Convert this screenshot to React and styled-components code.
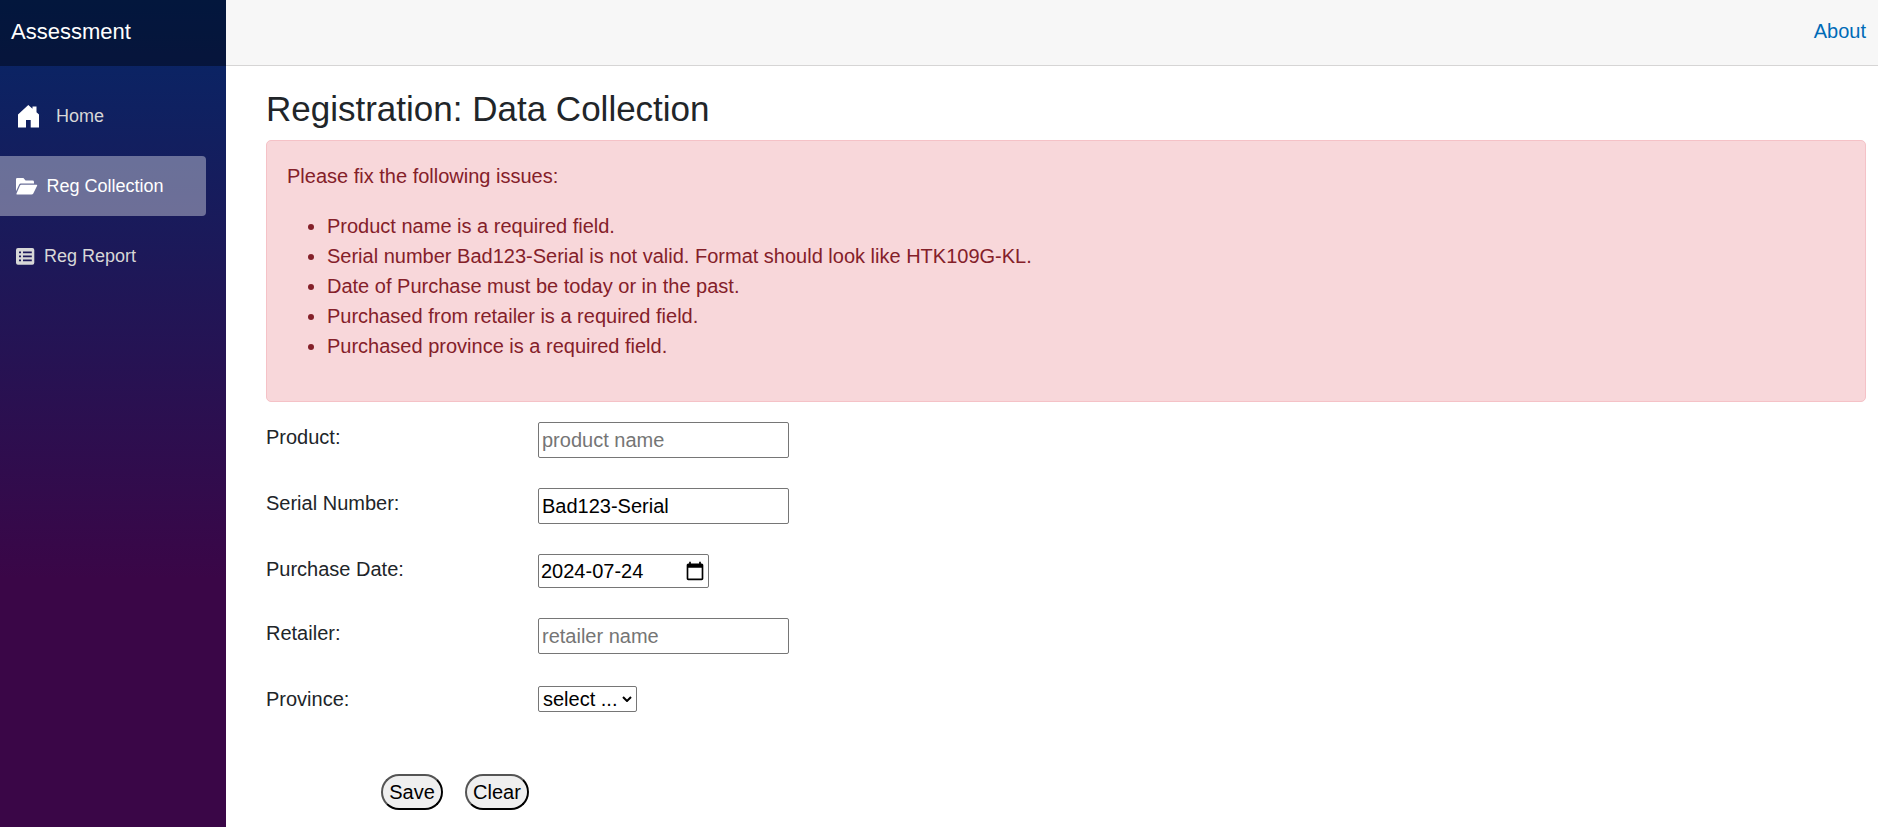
import React from 'react';
import styled, { createGlobalStyle } from 'styled-components';

const GlobalStyle = createGlobalStyle`
  *, *::before, *::after { box-sizing: border-box; }
  html, body, #root { height: 100%; }
  body {
    margin: 0;
    overflow: hidden;
    background: #fff;
    color: #212529;
    font-family: "Liberation Sans", Arial, sans-serif;
    font-size: 20px;
    line-height: 30px;
  }
`;

const Page = styled.div`
  display: flex;
  height: 100%;
`;

const Sidebar = styled.aside`
  flex: 0 0 226px;
  background-image: linear-gradient(180deg, rgb(5, 39, 103) 0%, #3a0647 70%);
`;

const Brand = styled.div`
  display: flex;
  align-items: center;
  height: 66px;
  padding: 0 0 3px 11px;
  background: rgba(0, 0, 0, 0.4);
  color: #fff;
  font-size: 22px;
`;

const Nav = styled.nav`
  display: flex;
  flex-direction: column;
  gap: 10px;
  padding-top: 20px;
`;

const NavItem = styled.a`
  display: flex;
  align-items: center;
  width: 206px;
  height: 60px;
  padding-left: ${(p) => p.$indent}px;
  gap: ${(p) => p.$gap}px;
  border-radius: 0 4px 4px 0;
  font-size: 18px;
  color: ${(p) => (p.$active ? '#fff' : '#d7d7d7')};
  background: ${(p) => (p.$active ? 'rgba(255, 255, 255, 0.37)' : 'transparent')};

  svg { color: ${(p) => p.$iconColor || 'inherit'}; flex: none; }
`;

const Main = styled.main`
  flex: 1;
  min-width: 0;
`;

const TopRow = styled.header`
  display: flex;
  justify-content: flex-end;
  align-items: center;
  height: 66px;
  padding: 0 12px 3px;
  background: #f7f7f7;
  border-bottom: 1px solid #d6d5d5;
`;

const AboutLink = styled.a`
  color: #006bb7;
`;

const Content = styled.article`
  padding: 22px 12px 0 40px;
`;

const Title = styled.h3`
  margin: 0 0 10px;
  font-size: 35px;
  font-weight: 400;
  line-height: 42px;
`;

const Alert = styled.section`
  height: 262px;
  padding: 20px;
  margin-bottom: 20px;
  border: 1px solid #f5c2c7;
  border-radius: 5px;
  background: #f8d7da;
  color: #842029;
`;

const AlertText = styled.p`
  margin: 0 0 20px;
`;

const IssueList = styled.ul`
  margin: 0;
  padding-left: 40px;
`;

const Row = styled.div`
  display: flex;
  align-items: flex-start;
  height: ${(p) => p.$height}px;
`;

const Label = styled.label`
  width: 272px;
`;

const TextInput = styled.input`
  width: 251px;
  height: 36px;
  padding: 1px 3px;
  border: 1px solid #767676;
  border-radius: 2px;
  background: #fff;
  color: #000;
  font: inherit;

  &::placeholder { color: #757575; }
`;

const DateField = styled.div`
  display: flex;
  align-items: center;
  justify-content: space-between;
  width: 171px;
  height: 34px;
  padding: 0 3px 0 2px;
  border: 1px solid #767676;
  border-radius: 2px;
  color: #000;
`;

const SelectField = styled.div`
  display: flex;
  align-items: center;
  gap: 5px;
  width: 99px;
  height: 26px;
  margin-top: 2px;
  padding-left: 4px;
  border: 1px solid #767676;
  border-radius: 2px;
  color: #000;
  white-space: nowrap;
`;

const Actions = styled.div`
  display: flex;
  gap: 22px;
  padding-left: 115px;
`;

const ActionButton = styled.button`
  width: ${(p) => p.$width}px;
  height: 36px;
  padding: 0;
  border: 2px outset #000;
  border-radius: 18px;
  background: #efefef;
  color: #000;
  font: inherit;
  line-height: 30px;
`;

const HomeIcon = () => (
  <svg width="22" height="23" viewBox="0 0 22 23" fill="currentColor">
    <path d="M0 9.500L10.300 0L14.500 3.800V1.500H18.500V7.300L21 9.500V22.500H12.700V15H8V22.500H0z" />
  </svg>
);

const FolderIcon = () => (
  <svg width="22" height="17" viewBox="0 0 22 17" fill="currentColor">
    <path d="M0 13.300V1.200Q0 0 1.200 0H7.400L9.600 2.600H16.500Q18 2.600 18 4V5.400H4.700Q3.700 5.400 3.200 6.400z" />
    <path d="M5.300 6.700H20.500Q21.600 6.700 21.100 7.700L17.300 15.500Q16.700 16.600 15.500 16.600H1Q0 16.600 .5 15.600L4 7.600Q4.400 6.700 5.300 6.700z" />
  </svg>
);

const TableIcon = () => (
  <svg width="19" height="17" viewBox="0 0 19 17" fill="currentColor">
    <path
      fillRule="evenodd"
      d="M2 0H16.300Q18.300 0 18.300 2V14.700Q18.300 16.700 16.300 16.700H2Q0 16.700 0 14.700V2Q0 0 2 0zM3 3.500V5.200H5V3.500zM7 3.500V5.200H15.800V3.500zM3 7.500V9.200H5V7.500zM7 7.500V9.200H15.800V7.500zM3 11.500V13.200H5V11.500zM7 11.500V13.200H15.800V11.500z"
    />
  </svg>
);

const CalendarIcon = () => (
  <svg width="20" height="20" viewBox="0 0 24 24">
    <path d="M20 3h-1V1h-2v2H7V1H5v2H4c-1.1 0-2 .9-2 2v16c0 1.1.9 2 2 2h16c1.100 0 2-.9 2-2V5c0-1.100-.9-2-2-2zm0 18H4V8h16v13z" />
  </svg>
);

const ChevronIcon = () => (
  <svg width="10" height="6" viewBox="0 0 10 6" fill="none" stroke="#000" strokeWidth="2">
    <path d="M1 1l4 4 4-4" />
  </svg>
);

const issues = [
  'Product name is a required field.',
  'Serial number Bad123-Serial is not valid. Format should look like HTK109G-KL.',
  'Date of Purchase must be today or in the past.',
  'Purchased from retailer is a required field.',
  'Purchased province is a required field.',
];

export default function App() {
  return (
    <>
      <GlobalStyle />
      <Page>
        <Sidebar>
          <Brand>Assessment</Brand>
          <Nav>
            <NavItem $indent={18} $gap={16} $iconColor="#fff">
              <HomeIcon />
              Home
            </NavItem>
            <NavItem $indent={16} $gap={8.5} $active>
              <FolderIcon />
              Reg Collection
            </NavItem>
            <NavItem $indent={16} $gap={9}>
              <TableIcon />
              Reg Report
            </NavItem>
          </Nav>
        </Sidebar>
        <Main>
          <TopRow>
            <AboutLink>About</AboutLink>
          </TopRow>
          <Content>
            <Title>Registration: Data Collection</Title>
            <Alert>
              <AlertText>Please fix the following issues:</AlertText>
              <IssueList>
                {issues.map((issue) => <li key={issue}>{issue}</li>)}
              </IssueList>
            </Alert>
            <Row $height={66}>
              <Label>Product:</Label>
              <TextInput placeholder="product name" />
            </Row>
            <Row $height={66}>
              <Label>Serial Number:</Label>
              <TextInput defaultValue="Bad123-Serial" />
            </Row>
            <Row $height={64}>
              <Label>Purchase Date:</Label>
              <DateField>2024-07-24<CalendarIcon /></DateField>
            </Row>
            <Row $height={66}>
              <Label>Retailer:</Label>
              <TextInput placeholder="retailer name" />
            </Row>
            <Row $height={90}>
              <Label>Province:</Label>
              <SelectField>select ...<ChevronIcon /></SelectField>
            </Row>
            <Actions>
              <ActionButton $width={62}>Save</ActionButton>
              <ActionButton $width={64}>Clear</ActionButton>
            </Actions>
          </Content>
        </Main>
      </Page>
    </>
  );
}
